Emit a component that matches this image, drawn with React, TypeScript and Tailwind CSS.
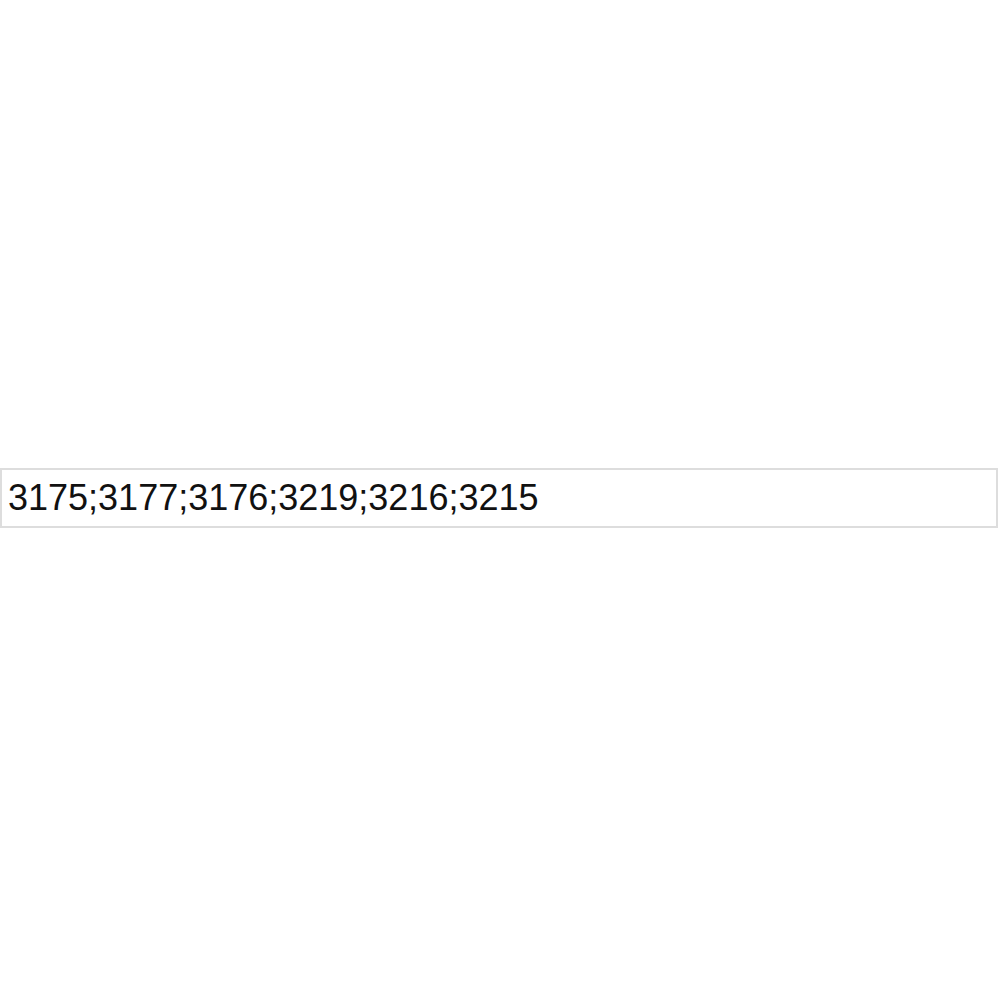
export default function App() {
  return (
    <div className="min-h-[1000px] w-[1000px] bg-white flex items-center pb-[4px]">
      <div className="w-[998px] h-[60px] border-2 border-[#dddddd] bg-white flex items-center pl-[6px]">
        <span className="text-[36px] leading-none text-[#111111] font-['Liberation_Sans',Arial,sans-serif]">
          3175;3177;3176;3219;3216;3215
        </span>
      </div>
    </div>
  );
}
